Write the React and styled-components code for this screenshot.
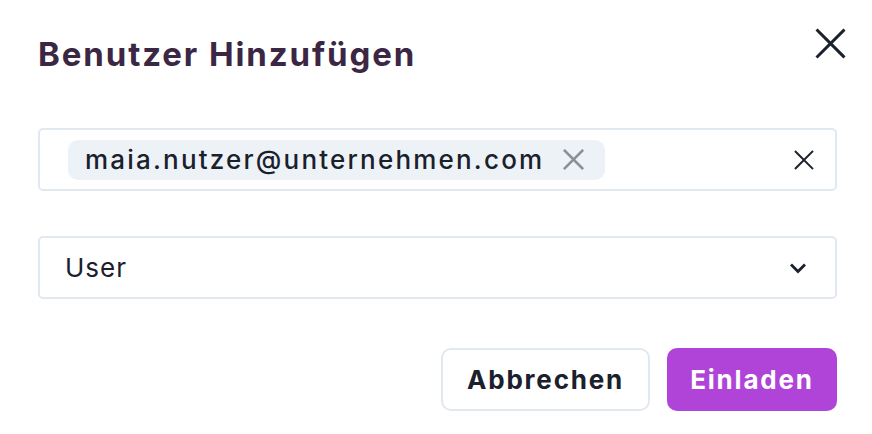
import React from 'react';
import styled, { createGlobalStyle } from 'styled-components';

const GlobalStyle = createGlobalStyle`
  html, body {
    margin: 0;
    background: #ffffff;
  }
  body {
    font-family: Inter, "Noto Sans", sans-serif;
    color: #1a202c;
  }
`;

const Dialog = styled.section`
  display: flex;
  flex-direction: column;
  padding: 26px 35px 0 38px;
  width: 872px;
  height: 434px;
  box-sizing: border-box;
`;

const Header = styled.header`
  display: flex;
  align-items: flex-start;
  justify-content: space-between;
  height: 56px;
`;

const Title = styled.h2`
  margin: 0;
  padding-top: 2px;
  font-size: 33px;
  font-weight: 700;
  line-height: 52px;
  color: #3b2743;
  letter-spacing: 1.9px;
`;

const IconButton = styled.button`
  display: flex;
  align-items: center;
  justify-content: center;
  padding: 0;
  border: 0;
  background: none;
  color: ${(p) => p.color || '#1a202c'};
  width: ${(p) => p.size}px;
  height: ${(p) => p.size}px;
  cursor: pointer;
`;

const CloseButton = styled(IconButton)`
  margin: -1px -11px 0 0;
`;

const Field = styled.div`
  display: flex;
  align-items: center;
  height: 63px;
  box-sizing: border-box;
  border: 2px solid #e2e8f0;
  border-radius: 5px;
  margin-top: ${(p) => p.top}px;
  padding: 0 ${(p) => p.trail}px 0 28px;
`;

const Tags = styled.div`
  flex: 1;
  display: flex;
  align-items: center;
`;

const Tag = styled.span`
  display: inline-flex;
  align-items: center;
  gap: 18px;
  height: 40px;
  padding: 0 21px 0 17px;
  background: #edf2f7;
  border-radius: 10px;
  font-size: 26px;
  font-weight: 500;
  letter-spacing: 2.2px;
  color: #1a202c;
`;

const SelectText = styled.span`
  flex: 1;
  margin-left: -3px;
  font-size: 26px;
  font-weight: 400;
  letter-spacing: 1px;
  color: #1a202c;
`;

const Footer = styled.footer`
  display: flex;
  justify-content: flex-end;
  gap: 17px;
  margin-top: 49px;
`;

const Button = styled.button`
  height: 63px;
  box-sizing: border-box;
  padding: 0;
  border-radius: 10px;
  font-family: inherit;
  font-size: 26px;
  font-weight: 700;
  letter-spacing: 1.8px;
  border: 2px solid ${(p) => (p.primary ? '#b044d8' : '#e2e8f0')};
  background: ${(p) => (p.primary ? '#b044d8' : '#ffffff')};
  color: ${(p) => (p.primary ? '#ffffff' : '#1a202c')};
  width: ${(p) => p.w}px;
  cursor: pointer;
`;

function Cross({ size, stroke }) {
  return (
    <svg width={size} height={size} viewBox="0 0 24 24" fill="none">
      <path
        d="M2 2L22 22M22 2L2 22"
        stroke="currentColor"
        strokeWidth={stroke}
        strokeLinecap="square"
      />
    </svg>
  );
}

function Chevron() {
  return (
    <svg width="18" height="12" viewBox="0 0 18 12" fill="none">
      <path d="M2 2.5L9 9.5L16 2.5" stroke="currentColor" strokeWidth="2.8" />
    </svg>
  );
}

export default function App() {
  return (
    <>
      <GlobalStyle />
      <Dialog>
        <Header>
          <Title>Benutzer Hinzufügen</Title>
          <CloseButton size={36} aria-label="Schließen">
            <Cross size={31} stroke={2.3} />
          </CloseButton>
        </Header>

        <Field top={46} trail={20}>
          <Tags>
            <Tag>
              maia.nutzer@unternehmen.com
              <IconButton size={22} color="#8a9099" aria-label="Entfernen">
                <Cross size={21} stroke={2.9} />
              </IconButton>
            </Tag>
          </Tags>
          <IconButton size={22} aria-label="Leeren">
            <Cross size={20} stroke={2.4} />
          </IconButton>
        </Field>

        <Field top={45} trail={27}>
          <SelectText>User</SelectText>
          <IconButton size={20} aria-label="Öffnen">
            <Chevron />
          </IconButton>
        </Field>

        <Footer>
          <Button w={209}>Abbrechen</Button>
          <Button primary w={170}>Einladen</Button>
        </Footer>
      </Dialog>
    </>
  );
}
